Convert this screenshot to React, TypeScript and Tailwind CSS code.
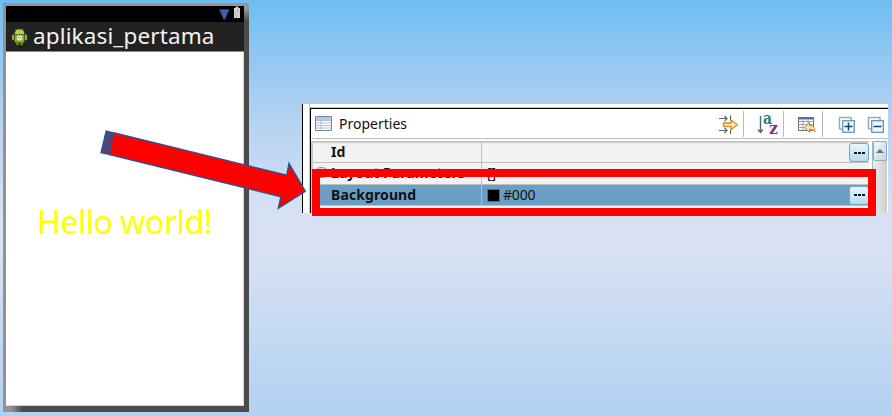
import React from "react";

function AndroidIcon() {
  return (
    <svg className="ml-[5px] h-[19px] w-[17px] shrink-0" viewBox="0 0 17 19">
      <path d="M4.5 1.8 6 4M12.5 1.8 11 4" stroke="#8fae3a" strokeWidth="0.8" />
      <path d="M3.5 7.2C3.5 4.2 5.6 2.2 8.5 2.2s5 2 5 5z" fill="#a9cf3c" />
      <rect x="3.6" y="7.6" width="9.8" height="7.8" rx="1" fill="#86a82a" />
      <rect x="0.9" y="7.4" width="2.2" height="5.8" rx="1" fill="#8db02e" />
      <rect x="13.9" y="7.4" width="2.2" height="5.8" rx="1" fill="#8db02e" />
      <rect x="5.2" y="14.5" width="2.5" height="3.8" rx="1" fill="#6f8f20" />
      <rect x="9.3" y="14.5" width="2.5" height="3.8" rx="1" fill="#6f8f20" />
      <circle cx="6.4" cy="5" r="0.6" fill="#fff" />
      <circle cx="10.6" cy="5" r="0.6" fill="#fff" />
      <rect x="5.8" y="8.6" width="5.4" height="4.8" rx="1.6" fill="#e6edd2" />
      <path d="M7 10l1.500 1.200L10 10" stroke="#6f8f20" fill="none" strokeWidth="0.8" />
    </svg>
  );
}

function Phone() {
  return (
    <div className="relative ml-[3px] mt-[3px] h-[409px] w-[246px] shrink-0 bg-[#4b4b4b] pl-[3px] pt-[3px]">
      <div className="absolute inset-x-0 top-0 h-[3px] bg-[#989898]" />
      <div className="absolute inset-y-0 left-0 w-[3px] bg-[#929292]" />
      <div className="absolute right-0 top-0 h-[18px] w-[5px] bg-linear-to-b from-[#989898] from-30% to-[#4b4b4b]" />
      <div className="absolute bottom-0 left-0 h-[6px] w-[20px] bg-linear-to-r from-[#929292] from-40% to-[#4b4b4b]" />
      <div className="relative flex h-[400px] w-[238px] flex-col bg-white">
        <div className="flex h-[16px] justify-end bg-black">
          <svg className="h-[16px] w-[30px]" viewBox="0 0 30 16">
            <path d="M5.500 3.500h9.600L10.800 13.500h-1z" fill="#405fa8" stroke="#294480" strokeWidth="0.7" />
            <path d="M20 2h1.600V.6h2.800V2H26v10h-6z" fill="#d4d4d4" />
            <path d="M24 3l-3 4.300h2L22 11l3.200-4.800h-2z" fill="#fff" stroke="#777" strokeWidth="0.4" />
          </svg>
        </div>
        <div className="flex h-[30px] items-center border-b border-[#8a8a8a] bg-[#222]">
          <AndroidIcon />
          <span className="-mt-[2px] ml-[5px] whitespace-nowrap font-['Noto_Sans',sans-serif] text-[22.5px] leading-[28px] tracking-[0.13px] text-[#f2f2f2]">
            aplikasi_pertama
          </span>
        </div>
        <div className="flex flex-1 justify-center border-b border-r border-[#d8d8d8] pt-[148px]">
          <span className="whitespace-nowrap font-['Noto_Sans',sans-serif] text-[32px] leading-[44px] tracking-[-0.45px] text-[#ffff00]">
            Hello world!
          </span>
        </div>
      </div>
    </div>
  );
}

function TableIcon() {
  return (
    <svg className="h-[15px] w-[17px]" viewBox="0 0 17 15">
      <rect x="0.5" y="0.5" width="16" height="14" fill="#fff" />
      <path d="M1 2.500h15" stroke="#b5c8e4" strokeWidth="3" />
      <path d="M1 4.500h15M1 7h15M1 9.500h15M1 12h15M6 4v10" stroke="#a9b7cc" strokeWidth="0.9" />
      <path d="M.5.5h16v14H.5z" fill="none" stroke="#7187a8" />
    </svg>
  );
}

function ToolbarIcons() {
  return (
    <svg className="h-[28px] w-[172px]" viewBox="716 110 172 28">
      <path d="M719 118.500h8M724.500 116l2.500 2.500-2.500 2.500M730.500 115.500v5M719 130.500h8M724.500 128l2.500 2.500-2.500 2.500M730.500 129.500v4.500" fill="none" stroke="#59636b" strokeWidth="1.200" />
      <path d="M723.500 123h7.500v-3l6.500 4.800-6.500 4.800V126.500h-7.500z" fill="#ffebb0" stroke="#ca9130" strokeWidth="1.300" />
      <path d="M743.500 111v26M783.500 111v26M822.500 111v26" stroke="#b9b9b9" />
      <path d="M760.500 116v16M758 129.500l2.500 3 2.500-3" fill="none" stroke="#526875" strokeWidth="1.400" />
      <text x="763" y="124" textLength="9" lengthAdjust="spacingAndGlyphs" fontFamily="DejaVu Serif, serif" fontWeight="bold" fontSize="16" fill="#267f73">a</text>
      <text x="769" y="133.500" textLength="9" lengthAdjust="spacingAndGlyphs" fontFamily="DejaVu Serif, serif" fontWeight="bold" fontSize="16" fill="#873085">z</text>
      <rect x="798.500" y="117.500" width="15" height="13" fill="#fff" stroke="#6b7382" />
      <path d="M799 118.500h14" stroke="#53749f" strokeWidth="2" />
      <path d="M799 121.500h14M799 124.500h14M799 127.500h14M803 120v10M808 120v8" stroke="#9ba4b1" />
      <path d="M804.500 127.500l5-5v3c4 0 6 2.500 5.300 6.500-1.500-2.400-2.800-2.600-5.300-2.600v3z" fill="#ffe19a" stroke="#c68721" />
      <path d="M839.500 129v-11.500h11.500v3M839.500 129h3" fill="none" stroke="#8baec5" strokeWidth="1.500" />
      <rect x="842.700" y="120.700" width="11.600" height="11.600" fill="#edf8ff" stroke="#6795b4" strokeWidth="1.300" />
      <path d="M844.500 126.500h8M848.500 122.500v8" stroke="#17456b" strokeWidth="1.500" />
      <path d="M868.500 129v-11.500h11.500v3M868.500 129h3" fill="none" stroke="#8baec5" strokeWidth="1.500" />
      <rect x="871.700" y="120.700" width="11.600" height="11.600" fill="#edf8ff" stroke="#6795b4" strokeWidth="1.300" />
      <path d="M873.500 126.500h8" stroke="#17456b" strokeWidth="1.500" />
    </svg>
  );
}

function MoreButton() {
  return (
    <div className="flex h-[19px] w-[20px] shrink-0 items-center justify-center gap-[1px] rounded-[3px] border border-[#6eaad0] bg-linear-to-b from-[#eaf6fd] to-[#b5dbf2]">
      <i className="h-[2px] w-[3px] bg-[#101820]" />
      <i className="h-[2px] w-[3px] bg-[#101820]" />
      <i className="h-[2px] w-[3px] bg-[#101820]" />
    </div>
  );
}

function PropertiesPanel() {
  return (
    <div className="ml-[53px] mt-[104px] flex h-[109px] w-[586px] shrink-0 overflow-hidden border-l border-black bg-white font-['Noto_Sans',sans-serif] text-[14px] text-[#111]">
      <div className="w-[7px] shrink-0 border-r border-[#c5c5c5]" />
      <div className="flex min-w-0 flex-1 flex-col">
        <div className="h-[4px] shrink-0 border-b border-[#c5c5c5]" />
        <div className="flex flex-1 flex-col border-l border-t border-black">
          <div className="ml-px flex h-[30px] shrink-0 items-center border-b border-[#bebebe] pl-[3px]">
            <TableIcon />
            <span className="ml-[7px]">Properties</span>
            <div className="ml-auto">
              <ToolbarIcons />
            </div>
          </div>
          <div className="mt-px flex flex-1 pt-px">
            <div className="w-[558px] shrink-0 border-l-2 border-t-2 border-[#c6c6c6]">
              <div className="flex h-[20px] items-center border-b border-[#c0c0c0] bg-[#f2f2f2]">
                <div className="flex h-full w-[169px] items-center border-r border-[#c0c0c0] pb-[2px] pl-[18px] font-bold">Id</div>
                <div className="ml-auto"><MoreButton /></div>
              </div>
              <div className="flex h-[22px] items-center border-b border-[#c0c0c0] bg-[#f2f2f2]">
                <div className="flex h-full w-[169px] items-center border-r border-[#c0c0c0] pb-[2px] pl-[3px] font-bold">
                  <span className="mr-[4px] h-[11px] w-[11px] rounded-sm border border-[#8b9eae] bg-[#d5e3ef]" />
                  <span className="whitespace-nowrap tracking-[0.05px]">Layout Parameters</span>
                </div>
                <span className="ml-[5px] pb-[2px]">[]</span>
              </div>
              <div className="flex h-[21px] items-center border-b border-[#c0c0c0] bg-[#6a9fc5]">
                <div className="flex h-full w-[169px] items-center border-r border-[#b0bcc4] pb-[2px] pl-[18px] font-bold tracking-[0.1px]">Background</div>
                <span className="ml-[5px] size-[13px] border border-[#666] bg-black" />
                <span className="ml-[3px] pb-[2px] tracking-[-0.2px]">#000</span>
                <div className="ml-auto"><MoreButton /></div>
              </div>
              <div className="h-[8px] bg-[#f2f2f2]" />
            </div>
            <div className="ml-[3px] w-[15px] border-l border-[#9cb8c8] bg-linear-to-r from-[#eeeeee] to-[#cecece]">
              <div className="flex h-[20px] items-center justify-center rounded-[2px] border border-[#8cabc0] bg-linear-to-br from-[#f4f8fb] to-[#c6d5df]">
                <svg className="h-[4px] w-[8px]" viewBox="0 0 8 4"><path d="M0 4 4 0l4 4z" fill="#5c7080" /></svg>
              </div>
            </div>
          </div>
        </div>
      </div>
    </div>
  );
}

export default function App() {
  return (
    <main className="relative flex h-[416px] w-[892px] items-start overflow-hidden bg-[linear-gradient(to_bottom,#6ebdf1_0%,#b0d0f2_26%,#d7e1f3_51%,#d7e1f3_61%,#b2d1f1_100%)]">
      <Phone />
      <PropertiesPanel />
      <div className="absolute left-[312px] top-[169px] h-[47px] w-[564px] border-8 border-[#ff0000]" />
      <svg className="absolute left-[95px] top-[120px] h-[95px] w-[220px]" viewBox="95 120 220 95">
        <path d="M105.700 130.200 113.700 132.200 109 155 100.200 153.300z" fill="#2f528f" />
        <path d="M110.200 132.800 105.700 153.300" stroke="#e00b1c" strokeWidth="1" />
        <path d="M113.500 132.700 286.800 175.200 289 163.500 305.300 191.300 278.300 208.300 280.900 196.700 109 154.500z" fill="#ff0000" stroke="#2f528f" strokeWidth="1.400" />
      </svg>
    </main>
  );
}
